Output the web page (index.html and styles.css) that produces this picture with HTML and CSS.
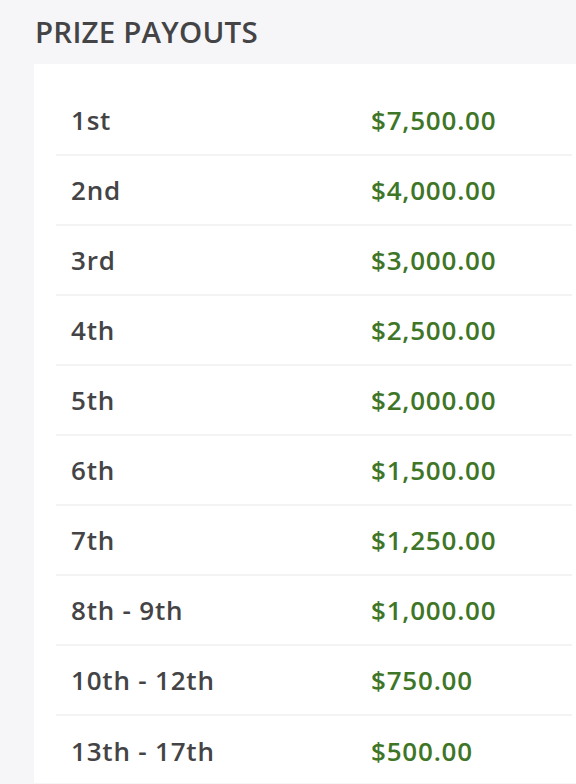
FILE: index.html
```html
<!DOCTYPE html>
<html lang="en">
<head>
    <meta charset="UTF-8">
    <meta name="viewport" content="width=device-width, initial-scale=1.0">
    <title>Prize Payouts</title>
    <link rel="stylesheet" href="styles.css">
</head>
<body>
    <div class="section">
        <h2 class="section-title">PRIZE PAYOUTS</h2>
        <div class="card">
            <table class="payouts">
                <tbody>
                    <tr><td class="place">1st</td><td class="amount">$7,500.00</td></tr>
                    <tr><td class="place">2nd</td><td class="amount">$4,000.00</td></tr>
                    <tr><td class="place">3rd</td><td class="amount">$3,000.00</td></tr>
                    <tr><td class="place">4th</td><td class="amount">$2,500.00</td></tr>
                    <tr><td class="place">5th</td><td class="amount">$2,000.00</td></tr>
                    <tr><td class="place">6th</td><td class="amount">$1,500.00</td></tr>
                    <tr><td class="place">7th</td><td class="amount">$1,250.00</td></tr>
                    <tr><td class="place">8th - 9th</td><td class="amount">$1,000.00</td></tr>
                    <tr><td class="place">10th - 12th</td><td class="amount">$750.00</td></tr>
                    <tr><td class="place">13th - 17th</td><td class="amount">$500.00</td></tr>
                </tbody>
            </table>
        </div>
    </div>
</body>
</html>
```

FILE: styles.css
```css
body {
    margin: 0;
    background-color: #f6f6f8;
    font-family: "Open Sans", Arial, sans-serif;
    color: #444446;
}
.section {
    padding: 14px 0 0 34px;
}
.section-title {
    margin: 0 0 14px 1px;
    font-size: 29.5px;
    font-weight: 600;
    line-height: 36px;
    letter-spacing: 0.2px;
}
.card {
    background-color: #fff;
    padding: 22px 4px 0 22px;
}
.payouts {
    width: 100%;
    border-collapse: collapse;
}
.payouts td {
    height: 68px;
    padding: 0;
    font-size: 26px;
    font-weight: 600;
    letter-spacing: 0.8px;
    border-bottom: 2px solid #f3f3f4;
    vertical-align: middle;
}
.payouts tr:last-child td {
    height: 65px;
    border-bottom: none;
    padding-top: 2px;
}
.place {
    width: 300px;
    padding-left: 15px !important;
}
.amount {
    color: #3e7526;
}
```
